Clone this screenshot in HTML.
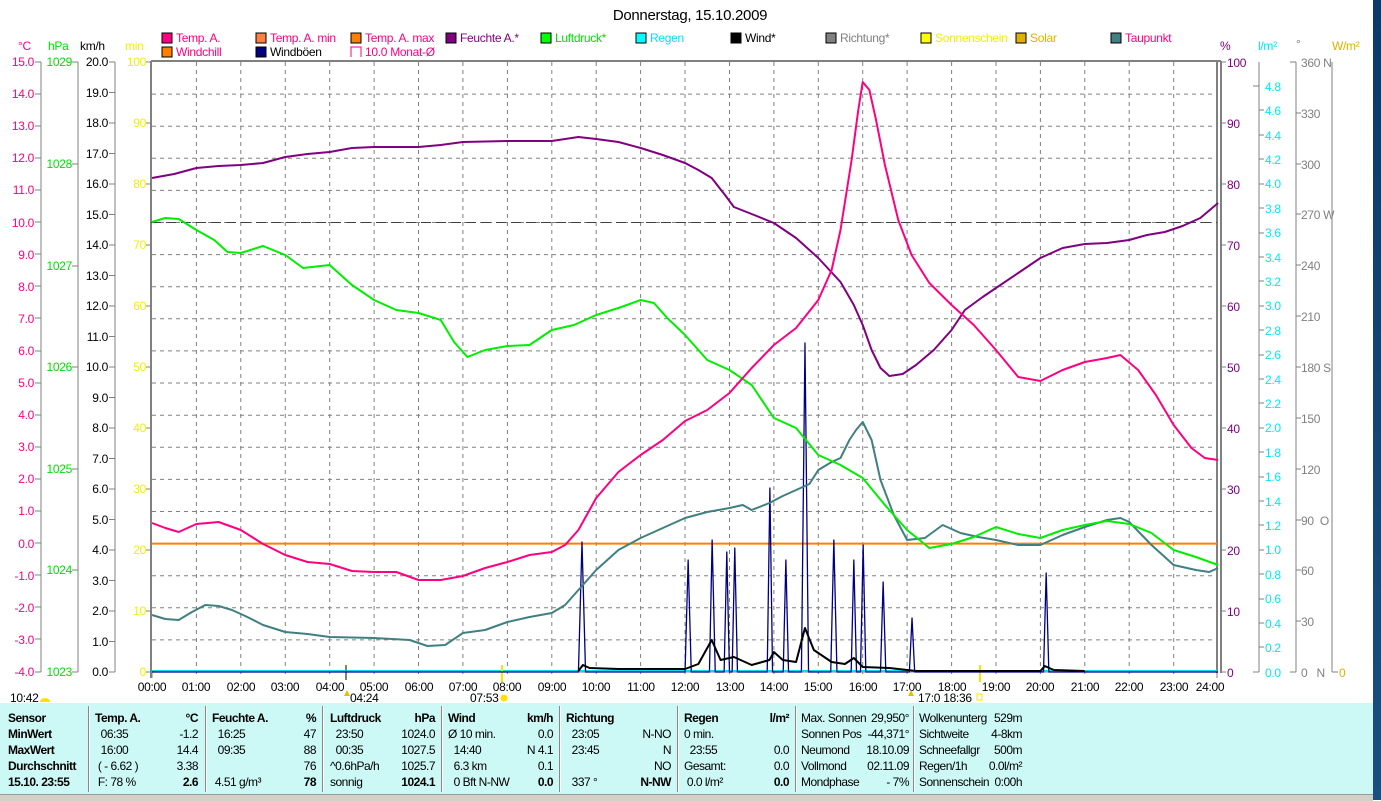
<!DOCTYPE html>
<html><head><meta charset="utf-8"><style>
body{margin:0;width:1381px;height:800px;overflow:hidden;background:#fff;font-family:"Liberation Sans",sans-serif;position:relative}
svg{position:absolute;left:0;top:0}
.p{position:absolute;background:#ccf8f5;left:0;top:703px;width:1373px;height:91px}
.t{position:absolute;font-size:12px;color:#000;white-space:nowrap;line-height:16px;letter-spacing:-0.5px}
.b{font-weight:bold}
.r{text-align:right}
.sep{position:absolute;top:706px;width:1px;height:86px;background:#888;border-right:1px solid #fff}
.sb{position:absolute;top:794px;height:6px;background:#d4d0c8;left:0;width:1373px;border-top:1px solid #999}
</style></head><body>
<svg width="1381" height="800" font-family="Liberation Sans, sans-serif" font-size="12" letter-spacing="-0.3">
<text x="690" y="20" font-size="15" text-anchor="middle">Donnerstag, 15.10.2009</text>
<g font-size="12">
<rect x="162" y="33" width="10" height="10" fill="#ff0080" stroke="#000"/><text x="176" y="42" fill="#ff0080">Temp. A.</text>
<rect x="162" y="47" width="10" height="10" fill="#ff8000" stroke="#000"/><text x="176" y="56" fill="#ff0080">Windchill</text>
<rect x="256" y="33" width="10" height="10" fill="#ff8040" stroke="#000"/><text x="270" y="42" fill="#ff0080">Temp. A. min</text>
<rect x="256" y="47" width="10" height="10" fill="#000080" stroke="#000"/><text x="270" y="56" fill="#000">Windböen</text>
<rect x="351" y="33" width="10" height="10" fill="#ff8000" stroke="#000"/><text x="365" y="42" fill="#ff0080">Temp. A. max</text>
<path d="M351 57V47h10v10" fill="none" stroke="#ff0080"/><text x="365" y="56" fill="#ff0080">10.0 Monat-Ø</text>
<rect x="446" y="33" width="10" height="10" fill="#800080" stroke="#000"/><text x="460" y="42" fill="#800080">Feuchte A.*</text>
<rect x="541" y="33" width="10" height="10" fill="#00ff00" stroke="#000"/><text x="555" y="42" fill="#00e000">Luftdruck*</text>
<rect x="636" y="33" width="10" height="10" fill="#00ffff" stroke="#000"/><text x="650" y="42" fill="#00e0ff">Regen</text>
<rect x="731" y="33" width="10" height="10" fill="#000" stroke="#000"/><text x="745" y="42">Wind*</text>
<rect x="826" y="33" width="10" height="10" fill="#808080" stroke="#000"/><text x="840" y="42" fill="#808080">Richtung*</text>
<rect x="921" y="33" width="10" height="10" fill="#ffff00" stroke="#000"/><text x="935" y="42" fill="#f0f000">Sonnenschein</text>
<rect x="1016" y="33" width="10" height="10" fill="#e0b000" stroke="#000"/><text x="1030" y="42" fill="#e0b000">Solar</text>
<rect x="1111" y="33" width="10" height="10" fill="#408080" stroke="#000"/><text x="1125" y="42" fill="#ff0080">Taupunkt</text>
</g>
<text x="18" y="50" fill="#ff0080">°C</text><text x="48" y="50" fill="#00e000">hPa</text><text x="80" y="50">km/h</text><text x="125" y="50" fill="#f0f000">min</text>
<text x="1220" y="50" fill="#800080">%</text><text x="1258" y="50" fill="#00e0ff">l/m²</text><text x="1296" y="48" fill="#808080">°</text><text x="1332" y="50" fill="#e0b000">W/m²</text>
<g stroke="#808080" stroke-dasharray="4,4" stroke-width="1">
<path d="M152 94.1H1217M152 126.2H1217M152 158.3H1217M152 190.4H1217M152 222.5H1217M152 254.6H1217M152 286.7H1217M152 318.8H1217M152 350.9H1217M152 383H1217M152 415.2H1217M152 447.3H1217M152 479.4H1217M152 511.5H1217M152 543.6H1217M152 575.7H1217M152 607.8H1217M152 639.9H1217"/>
<path d="M196.4 62V678M240.8 62V678M285.3 62V678M329.7 62V678M374.1 62V678M418.5 62V678M462.9 62V678M507.4 62V678M551.8 62V678M596.2 62V678M640.6 62V678M685 62V678M729.5 62V678M773.9 62V678M818.3 62V678M862.7 62V678M907.1 62V678M951.6 62V678M996 62V678M1040.4 62V678M1084.8 62V678M1129.2 62V678M1173.7 62V678"/>
</g>
<g stroke="#808080" fill="none">
<path d="M151 61H1221M151 61V678M1217 61V673M1221 61V673" stroke-width="2"/>
<path d="M152 672H1217M152 672V678M1217 672V678"/>
<path d="M41 62V672M78 62V672M115 62V672M1259 62V672M1296 62V672M1332 62V672"/>
</g>
<path d="M151 222.5H1217" stroke="#404040" stroke-dasharray="10,5"/>
<path d="M152 543.6H1217" stroke="#ff8000" stroke-width="2"/>
<path d="M152 671H1217" stroke="#00e0f0" stroke-width="2"/>
<g font-size="12">
<g fill="#ff0080" text-anchor="end">
<text x="34" y="66">15.0</text><text x="34" y="98">14.0</text><text x="34" y="130">13.0</text><text x="34" y="162">12.0</text><text x="34" y="194">11.0</text><text x="34" y="227">10.0</text><text x="34" y="259">9.0</text><text x="34" y="291">8.0</text><text x="34" y="323">7.0</text><text x="34" y="355">6.0</text><text x="34" y="387">5.0</text><text x="34" y="419">4.0</text><text x="34" y="451">3.0</text><text x="34" y="483">2.0</text><text x="34" y="515">1.0</text><text x="34" y="548">0.0</text><text x="34" y="580">-1.0</text><text x="34" y="612">-2.0</text><text x="34" y="644">-3.0</text><text x="34" y="676">-4.0</text>
</g>
<g stroke="#808080"><path d="M35 62h6M35 94h6M35 126h6M35 158h6M35 190h6M35 222h6M35 254h6M35 286h6M35 318h6M35 351h6M35 383h6M35 415h6M35 447h6M35 479h6M35 511h6M35 543h6M35 575h6M35 607h6M35 639h6M35 672h6"/>
<path d="M72 62h6M72 164h6M72 266h6M72 367h6M72 469h6M72 570h6M72 672h6"/>
<path d="M109 62h6M109 92.5h6M109 123h6M109 153.5h6M109 184h6M109 214.5h6M109 245h6M109 275.5h6M109 306h6M109 336.5h6M109 367h6M109 397.5h6M109 428h6M109 458.5h6M109 489h6M109 519.5h6M109 550h6M109 580.5h6M109 611h6M109 641.5h6M109 672h6"/>
<path d="M146 62h5M146 123h5M146 184h5M146 245h5M146 306h5M146 367h5M146 428h5M146 489h5M146 550h5M146 611h5M146 672h5"/>
<path d="M1221 62h5M1221 123h5M1221 184h5M1221 245h5M1221 306h5M1221 367h5M1221 428h5M1221 489h5M1221 550h5M1221 611h5M1221 672h5"/>
<path d="M1253 86h6M1259 110h5M1259 135h5M1259 159h5M1259 184h5M1259 208h5M1259 233h5M1259 257h5M1259 281h5M1259 306h5M1259 330h5M1259 355h5M1259 379h5M1259 403h5M1259 428h5M1259 452h5M1259 477h5M1259 501h5M1259 525h5M1259 550h5M1259 574h5M1259 599h5M1259 623h5M1259 647h5M1253 672h6"/>
<path d="M1290 62h6M1296 113h5M1296 164h5M1296 214h5M1296 265h5M1296 316h5M1296 367h5M1296 418h5M1296 469h5M1296 520h5M1296 570h5M1296 621h5M1290 672h6M1332 672h6"/></g>
<g fill="#00e000" text-anchor="end"><text x="72" y="66">1029</text><text x="72" y="168">1028</text><text x="72" y="270">1027</text><text x="72" y="371">1026</text><text x="72" y="473">1025</text><text x="72" y="574">1024</text><text x="72" y="676">1023</text></g>
<g text-anchor="end"><text x="108" y="66">20.0</text><text x="108" y="97">19.0</text><text x="108" y="127">18.0</text><text x="108" y="158">17.0</text><text x="108" y="188">16.0</text><text x="108" y="219">15.0</text><text x="108" y="249">14.0</text><text x="108" y="280">13.0</text><text x="108" y="310">12.0</text><text x="108" y="341">11.0</text><text x="108" y="371">10.0</text><text x="108" y="402">9.0</text><text x="108" y="432">8.0</text><text x="108" y="463">7.0</text><text x="108" y="493">6.0</text><text x="108" y="524">5.0</text><text x="108" y="554">4.0</text><text x="108" y="585">3.0</text><text x="108" y="615">2.0</text><text x="108" y="646">1.0</text><text x="108" y="676">0.0</text></g>
<g fill="#f0f000" text-anchor="end"><text x="146" y="66">100</text><text x="146" y="127">90</text><text x="146" y="188">80</text><text x="146" y="249">70</text><text x="146" y="310">60</text><text x="146" y="371">50</text><text x="146" y="432">40</text><text x="146" y="493">30</text><text x="146" y="554">20</text><text x="146" y="615">10</text><text x="146" y="676">0</text></g>
<g fill="#800080"><text x="1227" y="67">100</text><text x="1227" y="128">90</text><text x="1227" y="189">80</text><text x="1227" y="250">70</text><text x="1227" y="311">60</text><text x="1227" y="372">50</text><text x="1227" y="433">40</text><text x="1227" y="494">30</text><text x="1227" y="555">20</text><text x="1227" y="616">10</text><text x="1227" y="677">0</text></g>
<g fill="#00e8f8"><text x="1265" y="91">4.8</text><text x="1265" y="115">4.6</text><text x="1265" y="140">4.4</text><text x="1265" y="164">4.2</text><text x="1265" y="188">4.0</text><text x="1265" y="213">3.8</text><text x="1265" y="237">3.6</text><text x="1265" y="262">3.4</text><text x="1265" y="286">3.2</text><text x="1265" y="310">3.0</text><text x="1265" y="335">2.8</text><text x="1265" y="359">2.6</text><text x="1265" y="384">2.4</text><text x="1265" y="408">2.2</text><text x="1265" y="432">2.0</text><text x="1265" y="457">1.8</text><text x="1265" y="481">1.6</text><text x="1265" y="506">1.4</text><text x="1265" y="530">1.2</text><text x="1265" y="554">1.0</text><text x="1265" y="579">0.8</text><text x="1265" y="603">0.6</text><text x="1265" y="628">0.4</text><text x="1265" y="652">0.2</text><text x="1265" y="677">0.0</text></g>
<g fill="#808080"><text x="1301" y="67">360 N</text><text x="1301" y="118">330</text><text x="1301" y="169">300</text><text x="1301" y="219">270 W</text><text x="1301" y="270">240</text><text x="1301" y="321">210</text><text x="1301" y="372">180 S</text><text x="1301" y="423">150</text><text x="1301" y="474">120</text><text x="1301" y="525">90&#160;&#160;O</text><text x="1301" y="575">60</text><text x="1301" y="626">30</text><text x="1301" y="677">0&#160;&#160;&#160;N</text></g>
<text x="1339" y="677" fill="#e0b000">0</text>
</g>
<g text-anchor="middle" font-size="12">
<text x="152" y="691">00:00</text><text x="196" y="691">01:00</text><text x="241" y="691">02:00</text><text x="285" y="691">03:00</text><text x="330" y="691">04:00</text><text x="374" y="691">05:00</text><text x="419" y="691">06:00</text><text x="463" y="691">07:00</text><text x="507" y="691">08:00</text><text x="552" y="691">09:00</text><text x="596" y="691">10:00</text><text x="641" y="691">11:00</text><text x="685" y="691">12:00</text><text x="730" y="691">13:00</text><text x="774" y="691">14:00</text><text x="818" y="691">15:00</text><text x="863" y="691">16:00</text><text x="907" y="691">17:00</text><text x="952" y="691">18:00</text><text x="996" y="691">19:00</text><text x="1040" y="691">20:00</text><text x="1085" y="691">21:00</text><text x="1129" y="691">22:00</text><text x="1174" y="691">23:00</text><text x="1210" y="691">24:00</text>
</g>
<g font-size="12"><text x="10" y="702">10:42</text><path d="M40 702a5 4 0 0 1 10 0z" fill="#ffe000"/>
<text x="350" y="702">04:24</text><text x="470" y="702">07:53</text><circle cx="504" cy="698" r="3.5" fill="#ffe000"/>
<text x="918" y="702">17:0  18:36</text><rect x="977" y="694" width="5" height="6" fill="none" stroke="#ffe000"/>
<path d="M346 665V680" stroke="#808080" stroke-width="2"/><path d="M502 665V682M980 665V682" stroke="#ffe000" stroke-width="2"/>
<path d="M347 690l-3 6h6z M911 690l-3 6h6z" fill="#e0c000"/></g>
<g transform="translate(152,0) scale(44.42,1)" fill="none" stroke-linejoin="round">
<polyline vector-effect="non-scaling-stroke" stroke="#000080" stroke-width="1.3" points="0,672 9.6,672 9.68,542 9.76,672 12,672 12.07,560 12.14,672 12.55,672 12.61,540 12.68,672 12.88,672 12.94,552 13.0,672 13.06,672 13.12,548 13.18,672 13.85,672 13.91,488 13.97,672 14.21,672 14.27,560 14.33,672 14.62,672 14.70,343 14.78,672 15.28,672 15.35,540 15.42,672 15.74,672 15.80,560 15.86,672 15.95,672 16.01,545 16.07,672 16.40,672 16.46,582 16.52,672 17.05,672 17.11,618 17.17,672 20.07,672 20.13,573 20.19,672 24,672"/>
<polyline vector-effect="non-scaling-stroke" stroke="#000" stroke-width="2" points="9.6,671 9.7,665 9.85,668 10.5,669 12,669 12.3,664 12.6,640 12.8,660 13.1,657 13.5,665 13.9,660 14.0,652 14.2,660 14.5,662 14.7,628 14.9,650 15.3,662 15.6,664 15.8,658 16.0,667 16.6,668 17.0,670 17.2,671 20.0,671 20.1,666 20.3,670 21,671"/>
<polyline vector-effect="non-scaling-stroke" stroke="#408080" stroke-width="2" points="0,615 0.3,619 0.6,620 0.9,612 1.2,605 1.5,606 1.8,610 2.1,616 2.5,625 3,632 3.5,634 4,637 5,638 5.8,640 6.2,646 6.6,645 7,633 7.5,630 8,622 8.5,617 9,613 9.3,605 9.6,590 10,570 10.5,550 11,538 11.5,528 12,518 12.5,512 13,508 13.3,505 13.5,510 13.9,503 14.2,496 14.5,490 14.8,484 15.0,470 15.3,462 15.5,458 15.7,440 15.85,430 16,422 16.2,440 16.4,480 16.7,515 17,540 17.4,538 17.8,525 18.2,533 18.6,537 19,540 19.5,545 20,545 20.5,535 21,527 21.5,520 21.8,518 22,522 22.5,545 23,565 23.5,570 23.8,572 24,568"/>
<polyline vector-effect="non-scaling-stroke" stroke="#00ee00" stroke-width="2" points="0,222 0.3,218 0.6,219 1,230 1.4,240 1.7,252 2.0,253 2.5,246 3,255 3.4,268 4,265 4.5,285 5,300 5.5,310 6,313 6.5,320 6.8,342 7.1,357 7.5,350 8,346 8.5,345 9,330 9.5,325 10,315 10.5,308 11,300 11.3,303 11.6,318 12,335 12.5,360 13,370 13.5,385 14,418 14.5,428 15,455 15.5,465 16,478 16.5,505 17,530 17.5,548 18,544 18.5,537 19,527 19.5,534 20,538 20.5,530 21,525 21.5,521 22,524 22.5,533 23,550 23.5,557 24,565"/>
<polyline vector-effect="non-scaling-stroke" stroke="#800080" stroke-width="2" points="0,178 0.5,174 1,168 1.5,166 2,165 2.5,163 3,157 3.5,154 4,152 4.5,148 5,147 6,147 6.5,145 7,142 8,141 9,141 9.3,139 9.6,137 10,139 10.5,142 11,148 11.5,155 12,163 12.3,170 12.6,178 12.9,195 13.1,207 13.5,214 14,223 14.5,238 15,258 15.5,282 15.8,305 16,325 16.2,350 16.4,368 16.6,376 16.9,374 17.2,365 17.6,350 18,330 18.3,310 18.7,297 19,288 19.5,273 20,258 20.5,248 21,244 21.5,243 22,240 22.4,235 22.8,232 23.2,226 23.6,218 24,203"/>
<polyline vector-effect="non-scaling-stroke" stroke="#ff0080" stroke-width="2" points="0,523 0.3,528 0.6,532 1,524 1.5,522 2,530 2.5,544 3,555 3.5,562 4,564 4.5,571 5,572 5.5,572 6,580 6.5,580 7,576 7.5,568 8,562 8.5,555 9,552 9.3,545 9.6,530 10,498 10.5,472 11,455 11.5,440 12,421 12.5,410 13,393 13.5,368 14,345 14.5,328 15,300 15.3,270 15.5,230 15.75,160 15.9,110 16,82 16.15,90 16.3,120 16.5,165 16.8,220 17.1,255 17.5,283 18,305 18.5,325 19,350 19.5,377 20,381 20.5,370 21,362 21.5,358 21.8,355 22.2,370 22.6,395 23,425 23.4,448 23.7,458 24,460"/>
</g>
</svg>
<div class="p"></div>
<div class="sep" style="left:88px"></div><div class="sep" style="left:205px"></div><div class="sep" style="left:322px"></div><div class="sep" style="left:441px"></div><div class="sep" style="left:559px"></div><div class="sep" style="left:677px"></div><div class="sep" style="left:795px"></div><div class="sep" style="left:913px"></div>
<div class="t b" style="left:8px;top:710px">Sensor<br>MinWert<br>MaxWert<br>Durchschnitt<br>15.10. 23:55</div>
<div class="t" style="left:95px;top:710px"><b>Temp. A.</b><br>&nbsp; 06:35<br>&nbsp; 16:00<br>&nbsp;( - 6.62 )<br>&nbsp;F: 78 %</div>
<div class="t r" style="left:150px;width:48px;top:710px"><b>°C</b><br>-1.2<br>14.4<br>3.38<br><b>2.6</b></div>
<div class="t" style="left:212px;top:710px"><b>Feuchte A.</b><br>&nbsp; 16:25<br>&nbsp; 09:35<br>&nbsp;<br>&nbsp;4.51 g/m³</div>
<div class="t r" style="left:270px;width:46px;top:710px"><b>%</b><br>47<br>88<br>76<br><b>78</b></div>
<div class="t" style="left:330px;top:710px"><b>Luftdruck</b><br>&nbsp; 23:50<br>&nbsp; 00:35<br>^0.6hPa/h<br>sonnig</div>
<div class="t r" style="left:380px;width:55px;top:710px"><b>hPa</b><br>1024.0<br>1027.5<br>1025.7<br><b>1024.1</b></div>
<div class="t" style="left:448px;top:710px"><b>Wind</b><br>Ø 10 min.<br>&nbsp; 14:40<br>&nbsp; 6.3 km<br>&nbsp; 0 Bft N-NW</div>
<div class="t r" style="left:500px;width:53px;top:710px"><b>km/h</b><br>0.0<br>N 4.1<br>0.1<br><b>0.0</b></div>
<div class="t" style="left:566px;top:710px"><b>Richtung</b><br>&nbsp; 23:05<br>&nbsp; 23:45<br>&nbsp;<br>&nbsp; 337 °</div>
<div class="t r" style="left:620px;width:51px;top:710px">&nbsp;<br>N-NO<br>N<br>NO<br><b>N-NW</b></div>
<div class="t" style="left:684px;top:710px"><b>Regen</b><br>0 min.<br>&nbsp; 23:55<br>Gesamt:<br>&nbsp;0.0 l/m²</div>
<div class="t r" style="left:740px;width:49px;top:710px"><b>l/m²</b><br>&nbsp;<br>0.0<br>0.0<br><b>0.0</b></div>
<div class="t" style="left:801px;top:710px">Max. Sonnen<br>Sonnen Pos<br>Neumond<br>Vollmond<br>Mondphase</div>
<div class="t r" style="left:860px;width:49px;top:710px">29,950°<br>-44,371°<br>18.10.09<br>02.11.09<br>- 7%</div>
<div class="t" style="left:919px;top:710px">Wolkenunterg<br>Sichtweite<br>Schneefallgr<br>Regen/1h<br>Sonnenschein</div>
<div class="t r" style="left:985px;width:37px;top:710px">529m<br>4-8km<br>500m<br>0.0l/m²<br>0:00h</div>
<div class="sb"></div>
<div style="position:absolute;left:1373px;top:0;width:8px;height:800px;background:linear-gradient(#0a3a6a,#1a4f80)"></div>
</body></html>
